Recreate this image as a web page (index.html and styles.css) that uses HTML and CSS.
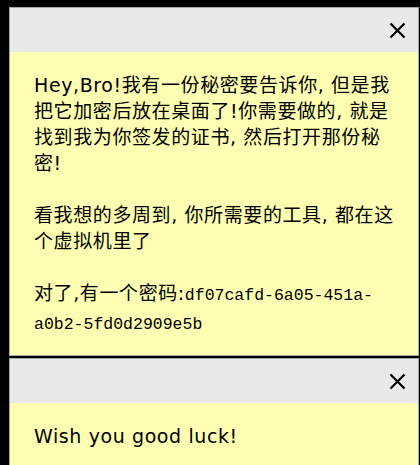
FILE: index.html
```html
<!DOCTYPE html>
<html lang="zh-CN">
<head>
<meta charset="utf-8">
<title>Notes</title>
<link rel="stylesheet" href="styles.css">
</head>
<body>
  <div class="note">
    <div class="note-bar">
      <button class="close" aria-label="关闭">
        <svg width="17" height="17" viewBox="0 0 17 17"><path d="M1.5 1.5 L15.5 15.5 M15.5 1.5 L1.5 15.5" stroke="#000" stroke-width="2.2" fill="none"/></svg>
      </button>
    </div>
    <div class="note-body">
      <p>Hey,Bro!我有一份秘密要告诉你, 但是我<br>把它加密后放在桌面了!你需要做的, 就是<br>找到我为你签发的证书, 然后打开那份秘<br>密!</p>
      <p>看我想的多周到, 你所需要的工具, 都在这<br>个虚拟机里了</p>
      <p>对了,有一个密码:<span class="code">df07cafd-6a05-451a-<br>a0b2-5fd0d2909e5b</span></p>
    </div>
  </div>
  <div class="note">
    <div class="note-bar">
      <button class="close" aria-label="关闭">
        <svg width="17" height="17" viewBox="0 0 17 17"><path d="M1.5 1.5 L15.5 15.5 M15.5 1.5 L1.5 15.5" stroke="#000" stroke-width="2.2" fill="none"/></svg>
      </button>
    </div>
    <div class="note-body">
      <p>Wish you good luck!</p>
    </div>
  </div>
</body>
</html>
```
FILE: styles.css
```css
html, body {
  background: #000;
}
body {
  margin: 7px 1px 0 9px;
  font-family: "DejaVu Sans", "Noto Sans CJK SC", sans-serif;
  font-size: 19px;
  line-height: 26px;
  color: #000;
  display: flex;
  flex-direction: column;
  gap: 2px;
}
.note {
  border: 1px solid #a6a6a6;
  background: #ffffb3;
}
.note-bar {
  height: 44px;
  background: #e9e9e9;
  display: flex;
  align-items: center;
  justify-content: flex-end;
  padding-right: 12px;
}
.close {
  border: 0;
  background: transparent;
  padding: 0;
  width: 17px;
  height: 17px;
  display: flex;
  margin-top: 1px;
}
.note-body {
  padding: 20px 24px 17px;
}
.note-body p {
  margin: 0 0 26px;
  letter-spacing: 0.6px;
}
.note-body p:last-child {
  margin-bottom: 0;
}
.code {
  font-family: "Liberation Mono", monospace;
  font-size: 16.5px;
  letter-spacing: 0;
}
```
